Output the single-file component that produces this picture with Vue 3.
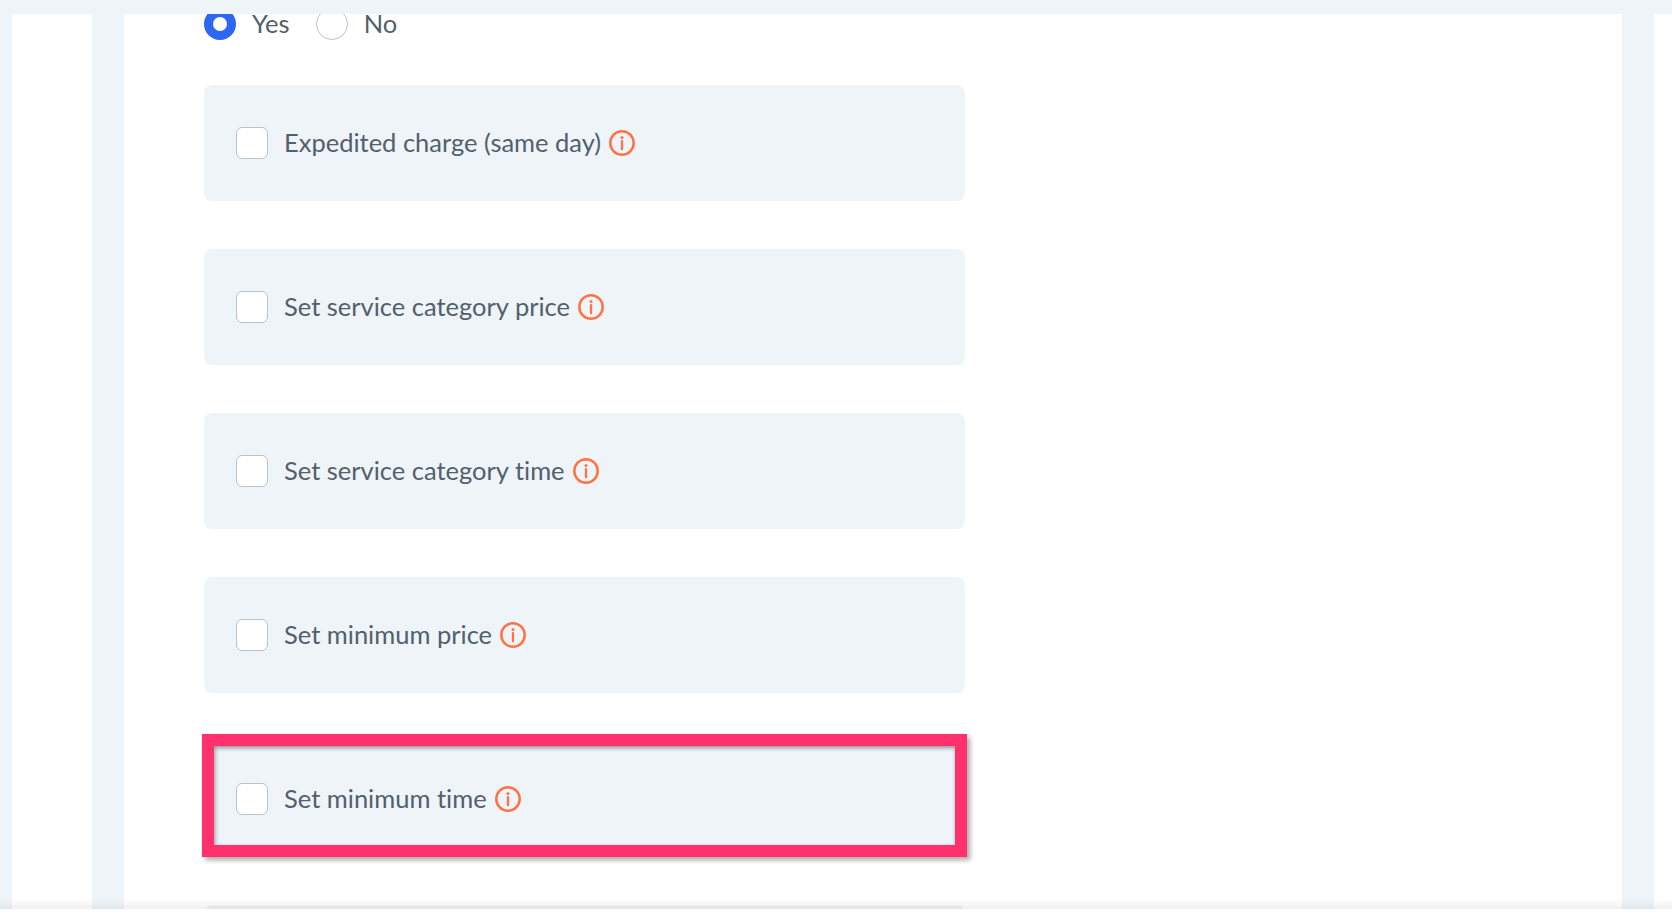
<template>
  <div class="page">
    <div class="stage">
      <div class="sidebar"></div>
      <main class="panel">
        <div class="form">
          <div class="radios">
            <label class="radio-item">
              <span class="radio checked"></span>
              <span class="label">Yes</span>
            </label>
            <label class="radio-item">
              <span class="radio"></span>
              <span class="label">No</span>
            </label>
          </div>
          <div
            v-for="option in options"
            :key="option.label"
            class="option"
            :class="{ highlighted: option.highlighted }"
          >
            <span v-if="option.label" class="checkbox"></span>
            <span v-if="option.label" class="label">{{ option.label }}</span>
            <svg v-if="option.label" class="info" viewBox="0 0 26 26" fill="none">
              <circle cx="13" cy="13" r="11.7" stroke="#ff7243" stroke-width="2.5" />
              <circle cx="13" cy="7.6" r="1.5" fill="#ff7243" />
              <path d="M13 11.2v8" stroke="#ff7243" stroke-width="2.3" stroke-linecap="round" />
            </svg>
            <div v-if="option.highlighted" class="marker"></div>
          </div>
        </div>
      </main>
      <div class="edge"></div>
      <div class="fade"></div>
    </div>
  </div>
</template>

<script setup>
const options = [
  { label: "Expedited charge (same day)" },
  { label: "Set service category price" },
  { label: "Set service category time" },
  { label: "Set minimum price" },
  { label: "Set minimum time", highlighted: true },
  { label: "" },
];
</script>

<style>
html,
body {
  margin: 0;
  background: #fff;
}
</style>

<style scoped>
.page {
  width: 1672px;
  height: 920px;
  background: #fff;
  overflow: hidden;
}

.stage {
  position: relative;
  display: flex;
  gap: 32px;
  box-sizing: border-box;
  width: 1672px;
  height: 909px;
  padding: 14px 0 0 12px;
  background: #eff4f8;
  overflow: hidden;
}

.sidebar {
  width: 80px;
  background: #fff;
}

.panel {
  width: 1498px;
  background: #fff;
  overflow: hidden;
}

.edge {
  width: 18px;
  background: #fff;
}

.form {
  margin-top: -6px;
  padding-left: 80px;
  width: 761px;
  font-family: Lato, "Liberation Sans", sans-serif;
  font-size: 25.5px;
  font-variant-ligatures: none;
  color: #52606d;
}

.radios {
  display: flex;
  gap: 26px;
  height: 61px;
  margin-bottom: 16px;
}

.radio-item {
  display: flex;
  align-items: center;
  gap: 16px;
  height: 32px;
}

.radio {
  box-sizing: border-box;
  width: 32px;
  height: 32px;
  border: 1px solid #bac2cc;
  border-radius: 50%;
  background: #fff;
}

.radio.checked {
  border: 9px solid #2d66f0;
}

.label {
  margin-bottom: 2px;
}

.option {
  position: relative;
  display: flex;
  align-items: center;
  box-sizing: border-box;
  height: 116px;
  margin-bottom: 48px;
  padding-left: 32px;
  border-radius: 8px;
  background: #eff4f8;
}

.checkbox {
  box-sizing: border-box;
  width: 32px;
  height: 32px;
  margin-right: 16px;
  border: 1px solid #bac2cc;
  border-radius: 6px;
  background: #fff;
}

.info {
  width: 26px;
  height: 26px;
  margin-left: 8px;
  margin-bottom: 1px;
}

.marker {
  position: absolute;
  left: -2px;
  right: -2px;
  top: -7px;
  bottom: 0;
  border: 12px solid #ff316d;
  box-shadow: 3px 3px 5px rgba(0, 0, 0, 0.35), inset 1px 2px 4px rgba(0, 0, 0, 0.4);
}

.fade {
  position: absolute;
  left: 0;
  right: 0;
  bottom: 0;
  height: 10px;
  background: linear-gradient(rgba(0, 0, 0, 0), rgba(0, 0, 0, 0.06));
}
</style>
